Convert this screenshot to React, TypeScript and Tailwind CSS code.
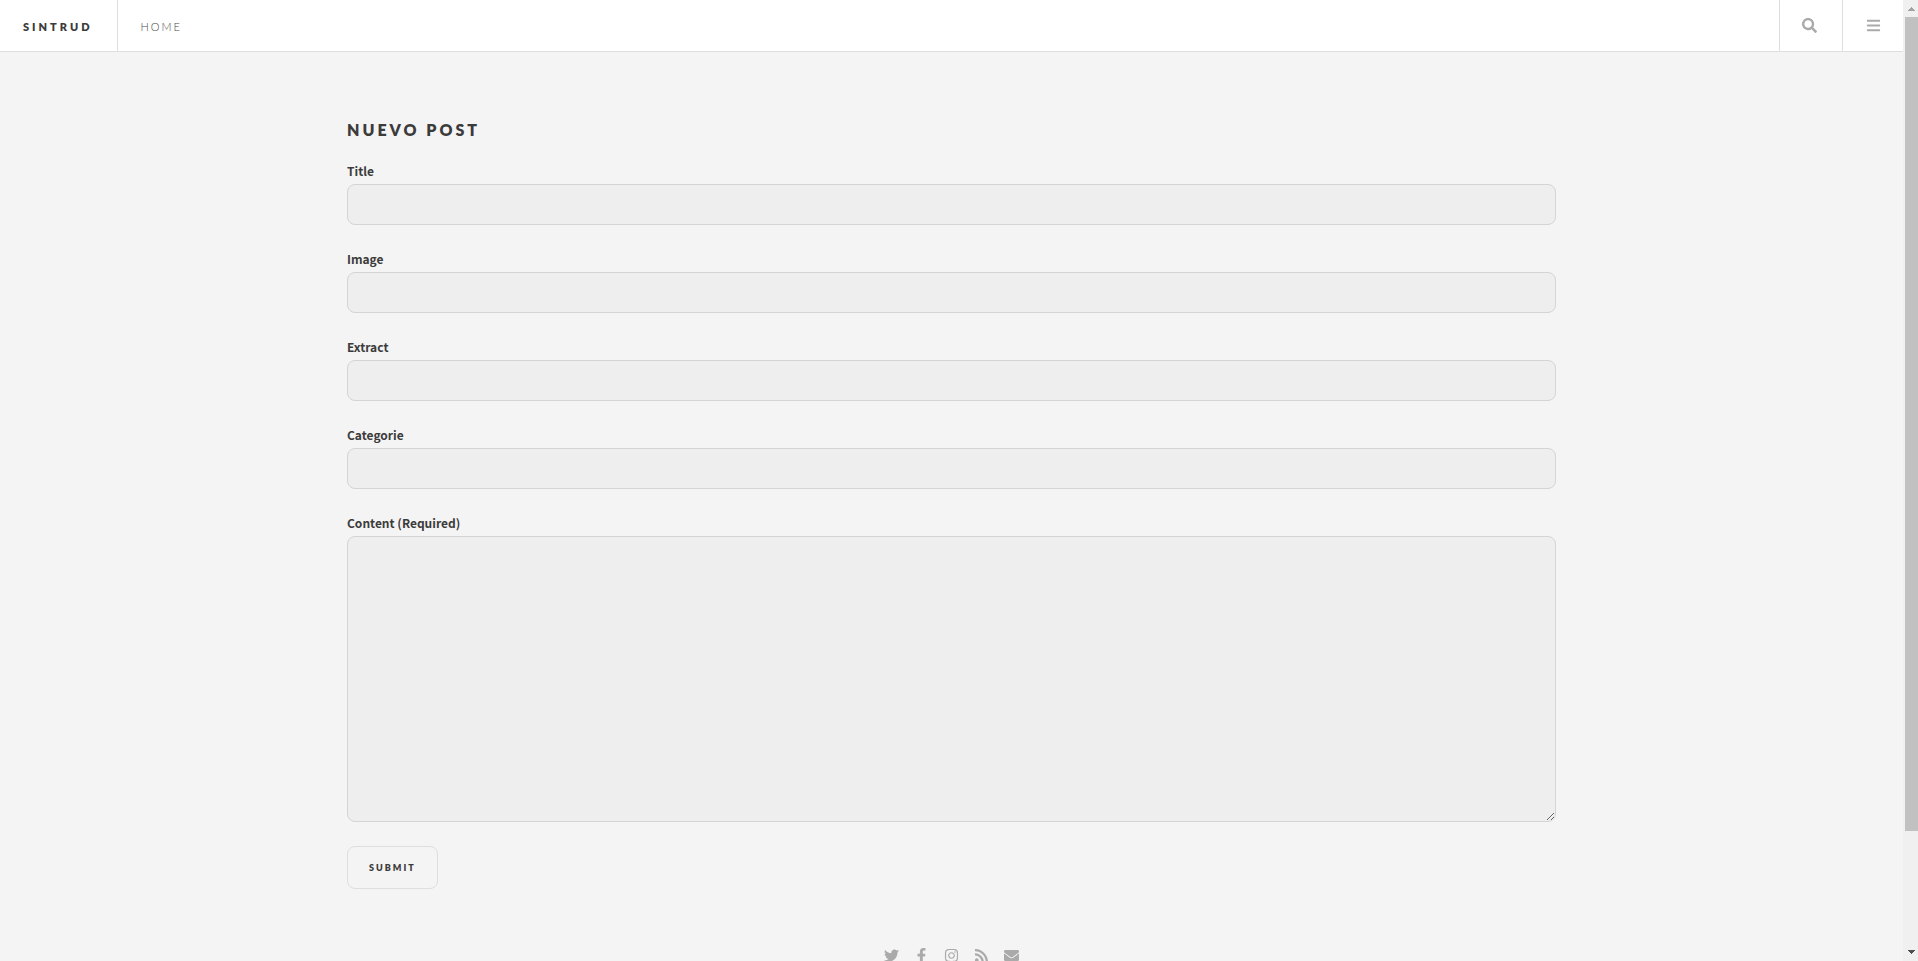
import { FaBars, FaEnvelope, FaFacebookF, FaInstagram, FaRss, FaSearch, FaTwitter } from "react-icons/fa";

const fields = [
  { id: "title", label: "Title" },
  { id: "image", label: "Image" },
  { id: "extract", label: "Extract" },
  { id: "categorie", label: "Categorie" },
];

const socials = [
  { name: "Twitter", Icon: FaTwitter },
  { name: "Facebook", Icon: FaFacebookF },
  { name: "Instagram", Icon: FaInstagram },
  { name: "RSS", Icon: FaRss },
  { name: "Email", Icon: FaEnvelope },
];

const labelClass =
  "block h-6 text-xs leading-[22px] font-bold text-[#3c3b3b] font-['Noto_Sans_CJK_SC',sans-serif]";
const inputClass =
  "block w-full rounded-lg border border-[#d4d4d4] bg-[#eeeeee] px-3 text-sm text-[#646464] outline-none";

function Header() {
  return (
    <header className="flex h-[52px] border-b border-[#dedede] bg-white">
      <h1 className="flex items-center border-r border-[#dedede] pt-1 pr-6 pl-[23px] text-[11px] font-extrabold tracking-[3px] text-[#3c3b3b]">
        <a href="#">SINTRUD</a>
      </h1>
      <nav className="flex flex-1 items-center pt-1 pl-[23px] text-[11px] font-light tracking-[2px] text-[#484848]">
        <a href="#">HOME</a>
      </nav>
      <button aria-label="Search" className="flex w-[63px] items-center justify-center border-l border-[#dedede] pr-1 text-[#aaaaaa]">
        <FaSearch className="h-[15px] w-auto" />
      </button>
      <button aria-label="Menu" className="flex w-[61px] items-center justify-center border-l border-[#dedede] text-[#aaaaaa]">
        <FaBars className="h-[15px] w-auto" />
      </button>
    </header>
  );
}

function PostForm() {
  return (
    <form onSubmit={(e) => e.preventDefault()}>
      {fields.map(({ id, label }) => (
        <div key={id} className="mb-[23px]">
          <label htmlFor={id} className={labelClass}>
            {label}
          </label>
          <input id={id} type="text" className={`${inputClass} h-[41px]`} />
        </div>
      ))}
      <label htmlFor="content" className={labelClass}>
        Content (Required)
      </label>
      <textarea id="content" className={`${inputClass} h-[286px] resize-y`} />
      <button
        type="submit"
        className="mt-6 h-[43px] rounded-lg border border-[#dedede] px-[21px] text-[9px] font-extrabold tracking-[2px] text-[#3c3b3b]"
      >
        SUBMIT
      </button>
    </form>
  );
}

function Scrollbar() {
  return (
    <div aria-hidden="true" className="flex w-[15px] flex-col items-center bg-[#f0f0f0]">
      <svg className="h-[17px] w-[15px]" viewBox="0 0 15 17" shapeRendering="crispEdges">
        <path d="M5 11h7l-3.5-4z" fill="#a3a3a3" />
      </svg>
      <div className="flex w-full flex-1 flex-col pl-0.5">
        <div className="h-[87.8%] bg-[#c1c1c1]" />
      </div>
      <svg className="h-[17px] w-[15px]" viewBox="0 0 15 17" shapeRendering="crispEdges">
        <path d="M5 6h7l-3.5 4z" fill="#505050" />
      </svg>
    </div>
  );
}

export default function App() {
  return (
    <div className="flex h-screen overflow-hidden bg-[#f4f4f4] font-[Lato,sans-serif]">
      <div className="min-w-0 flex-1 overflow-hidden">
        <Header />
        <main className="mx-auto max-w-[1209px] pt-[67px]">
          <h2 className="h-[41px] text-base leading-[22px] font-extrabold tracking-[3px] text-[#3c3b3b]">NUEVO POST</h2>
          <PostForm />
        </main>
        <footer className="mt-[59px] flex justify-center gap-[15px] text-[#aaaaaa]">
          {socials.map(({ name, Icon }) => (
            <a key={name} href="#" aria-label={name}>
              <Icon className="h-[15px] w-auto" />
            </a>
          ))}
        </footer>
      </div>
      <Scrollbar />
    </div>
  );
}
